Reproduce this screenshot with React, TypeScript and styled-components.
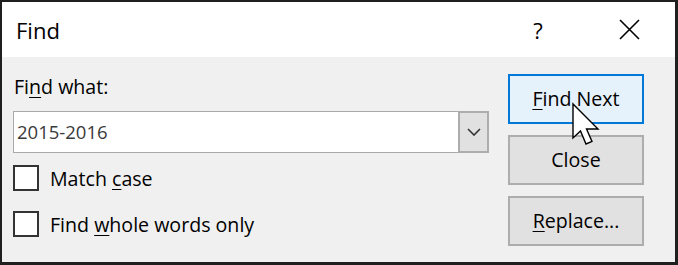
import styled, { createGlobalStyle } from "styled-components";

const GlobalStyle = createGlobalStyle`
  html, body {
    margin: 0;
    padding: 0;
    background: #1f1f1f;
  }
  body {
    font-family: "Open Sans", "Noto Sans", "Liberation Sans", sans-serif;
  }
`;

const Window = styled.div`
  position: relative;
  box-sizing: border-box;
  width: 678px;
  height: 265px;
  border-style: solid;
  border-color: #1f1f1f;
  border-width: 2px 3px 3px 2px;
  background: #f0f0f0;
  display: flex;
  flex-direction: column;
  overflow: hidden;
`;

const TitleBar = styled.div`
  height: 55px;
  background: #ffffff;
  display: flex;
  align-items: center;
  padding-left: 14px;
  color: #000;
`;

const Title = styled.span`
  font-size: 22px;
  flex: 1;
`;

const TitleButton = styled.button<{ $gap: number }>`
  width: 48px;
  height: 55px;
  border: none;
  background: transparent;
  display: flex;
  align-items: center;
  justify-content: center;
  font-family: inherit;
  font-size: 22px;
  color: #000;
  margin-right: ${(p) => p.$gap}px;
  padding: 0;
`;

const Body = styled.div`
  flex: 1;
  display: flex;
  gap: 19px;
  padding: 17px 0 0 11px;
`;

const Left = styled.div`
  width: 476px;
  display: flex;
  flex-direction: column;
`;

const Label = styled.div`
  font-size: 19.6px;
  line-height: 26px;
  color: #000;
  padding-left: 1px;
`;

const Key = styled.span`
  text-decoration: underline;
  text-underline-offset: 3px;
  text-decoration-thickness: 1px;
`;

const Combo = styled.div`
  margin-top: 11px;
  height: 42px;
  display: flex;
  box-sizing: border-box;
`;

const Input = styled.input`
  flex: 1;
  min-width: 0;
  box-sizing: border-box;
  height: 42px;
  border: 1px solid #a9a9a9;
  border-right: none;
  background: #fff;
  font-family: inherit;
  font-size: 18.5px;
  color: #3a3a3a;
  padding: 0 0 2px 3px;
  outline: none;
`;

const DropButton = styled.div`
  width: 31px;
  height: 42px;
  box-sizing: border-box;
  border: 2px solid #adadad;
  background: #e1e1e1;
  display: flex;
  align-items: center;
  justify-content: center;
`;

const CheckRow = styled.label<{ $top: number }>`
  display: flex;
  align-items: center;
  gap: 11px;
  height: 26px;
  font-size: 19.6px;
  color: #000;
  margin-top: ${(p) => p.$top}px;
`;

const Box = styled.span`
  width: 26px;
  height: 26px;
  box-sizing: border-box;
  border: 2px solid #333;
  background: #fff;
  flex-shrink: 0;
`;

const Right = styled.div`
  display: flex;
  flex-direction: column;
  gap: 11px;
`;

const Button = styled.button<{ $primary?: boolean }>`
  width: 136px;
  height: 50px;
  box-sizing: border-box;
  border: 2px solid ${(p) => (p.$primary ? "#0078d7" : "#adadad")};
  background: ${(p) => (p.$primary ? "#e5f1fb" : "#e1e1e1")};
  font-family: inherit;
  font-size: 19.6px;
  color: #000;
  padding: 0 0 2px;
`;

const Cursor = styled.svg`
  position: absolute;
  left: 569px;
  top: 100px;
`;

export default function App() {
  return (
    <>
      <GlobalStyle />
      <Window>
        <TitleBar>
          <Title>Find</Title>
          <TitleButton $gap={43}>?</TitleButton>
          <TitleButton $gap={22}>
            <svg width="21" height="21" viewBox="0 0 21 21">
              <path d="M1 1 L20 20 M20 1 L1 20" stroke="#000" strokeWidth="1.6" fill="none" />
            </svg>
          </TitleButton>
        </TitleBar>
        <Body>
          <Left>
            <Label>
              Fi<Key>n</Key>d what:
            </Label>
            <Combo>
              <Input defaultValue="2015-2016" />
              <DropButton>
                <svg width="14" height="8" viewBox="0 0 14 8">
                  <path d="M1 1 L7 7 L13 1" stroke="#333" strokeWidth="1.6" fill="none" />
                </svg>
              </DropButton>
            </Combo>
            <CheckRow $top={12}>
              <Box />
              <span>
                Match <Key>c</Key>ase
              </span>
            </CheckRow>
            <CheckRow $top={20}>
              <Box />
              <span>
                Find <Key>w</Key>hole words only
              </span>
            </CheckRow>
          </Left>
          <Right>
            <Button $primary>
              <Key>F</Key>ind Next
            </Button>
            <Button>Close</Button>
            <Button>
              <Key>R</Key>eplace...
            </Button>
          </Right>
        </Body>
        <Cursor width="30" height="46" viewBox="0 0 30 46">
          <path
            d="M2 2 L2 36 L9.5 29 L15 42 L21 39.5 L15.5 27 L27 27 Z"
            fill="#fff"
            stroke="#000"
            strokeWidth="1.4"
            strokeLinejoin="miter"
          />
        </Cursor>
      </Window>
    </>
  );
}
